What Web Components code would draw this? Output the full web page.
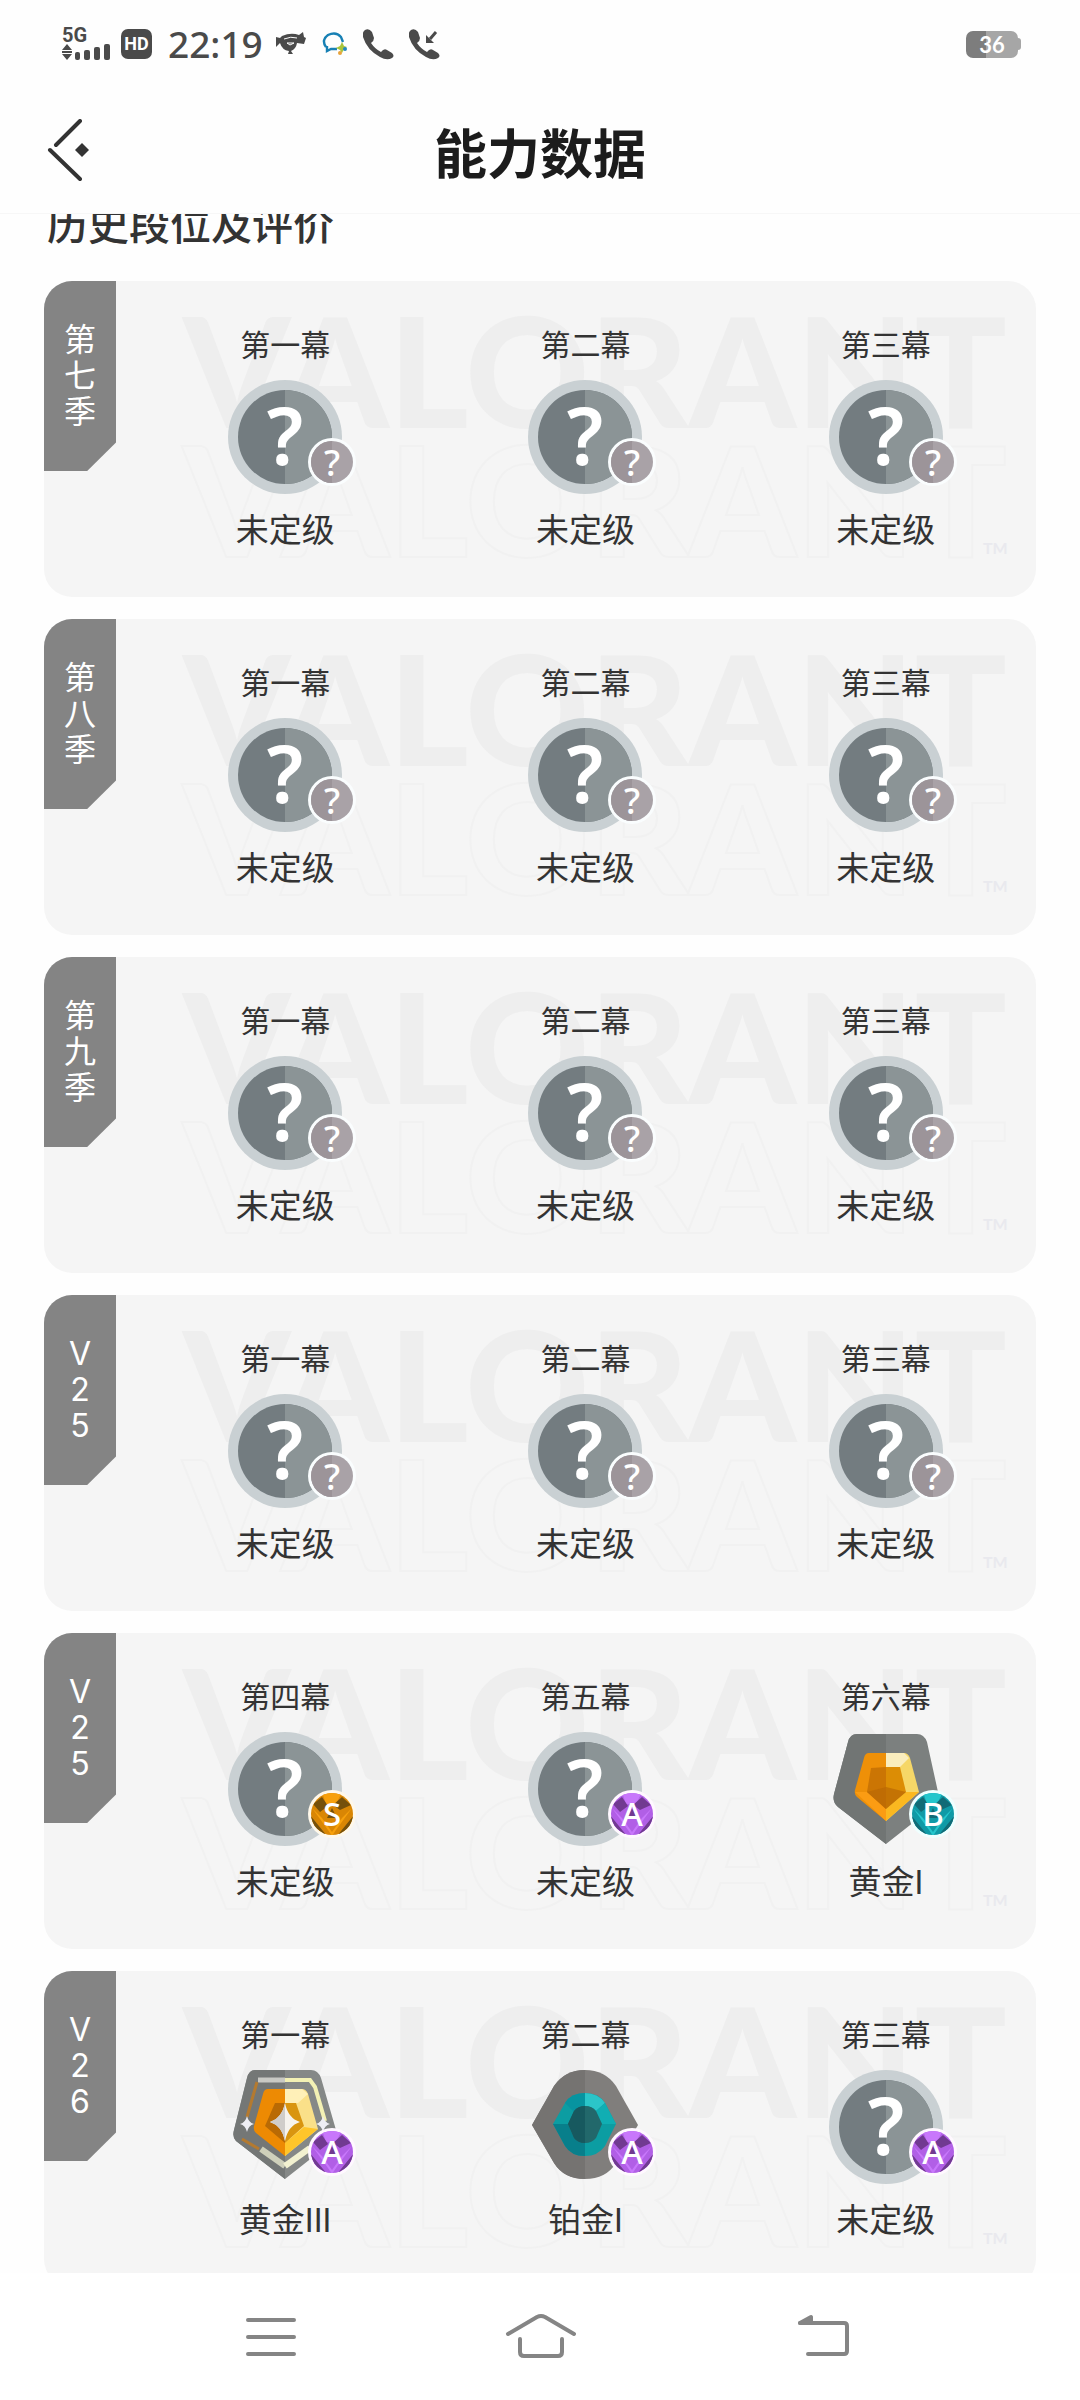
<!DOCTYPE html>
<html lang="zh-CN">
<head>
<meta charset="utf-8">
<meta name="viewport" content="width=device-width, initial-scale=1">
<title>能力数据</title>
<style>
  html, body { margin: 0; height: 100%; background: #fefefe; }
  body { font-family: "Noto Sans CJK SC", "Noto Sans", sans-serif; color: #333; }
</style>
</head>
<body>
<app-screen>
  <status-bar slot="status"></status-bar>
  <page-header slot="header">能力数据</page-header>
  <rank-history heading="历史段位及评价">
    <season-card label="第七季">
      <act-rank act="第一幕" rank="未定级" emblem="none" grade="?"></act-rank>
      <act-rank act="第二幕" rank="未定级" emblem="none" grade="?"></act-rank>
      <act-rank act="第三幕" rank="未定级" emblem="none" grade="?"></act-rank>
    </season-card>
    <season-card label="第八季">
      <act-rank act="第一幕" rank="未定级" emblem="none" grade="?"></act-rank>
      <act-rank act="第二幕" rank="未定级" emblem="none" grade="?"></act-rank>
      <act-rank act="第三幕" rank="未定级" emblem="none" grade="?"></act-rank>
    </season-card>
    <season-card label="第九季">
      <act-rank act="第一幕" rank="未定级" emblem="none" grade="?"></act-rank>
      <act-rank act="第二幕" rank="未定级" emblem="none" grade="?"></act-rank>
      <act-rank act="第三幕" rank="未定级" emblem="none" grade="?"></act-rank>
    </season-card>
    <season-card label="V25">
      <act-rank act="第一幕" rank="未定级" emblem="none" grade="?"></act-rank>
      <act-rank act="第二幕" rank="未定级" emblem="none" grade="?"></act-rank>
      <act-rank act="第三幕" rank="未定级" emblem="none" grade="?"></act-rank>
    </season-card>
    <season-card label="V25">
      <act-rank act="第四幕" rank="未定级" emblem="none" grade="S"></act-rank>
      <act-rank act="第五幕" rank="未定级" emblem="none" grade="A"></act-rank>
      <act-rank act="第六幕" rank="黄金I" emblem="gold1" grade="B"></act-rank>
    </season-card>
    <season-card label="V26">
      <act-rank act="第一幕" rank="黄金III" emblem="gold3" grade="A"></act-rank>
      <act-rank act="第二幕" rank="铂金I" emblem="platinum1" grade="A"></act-rank>
      <act-rank act="第三幕" rank="未定级" emblem="none" grade="A"></act-rank>
    </season-card>
  </rank-history>
  <system-nav slot="nav"></system-nav>
</app-screen>

<script>
class BaseElement extends HTMLElement {
  connectedCallback() {
    if (this.shadowRoot) return;
    this.attachShadow({ mode: "open" }).innerHTML = this.render();
  }
}

customElements.define("app-screen", class extends BaseElement {
  render() {
    return `
      <style>
        :host { display: flex; flex-direction: column; height: 100vh; overflow: hidden; }
        main { flex: 1; min-height: 0; overflow: hidden; }
      </style>
      <slot name="status"></slot>
      <slot name="header"></slot>
      <main><slot></slot></main>
      <slot name="nav"></slot>`;
  }
});

customElements.define("status-bar", class extends BaseElement {
  render() {
    const phone = `<path d="M2 1Q6-1 9 3L11 9Q11 12 8 14Q12 20 18 23Q21 19 24 21L29 24Q32 27 29 29Q24 32 17 28Q4 21 0 8Q-1 3 2 1Z"/>`;
    return `
      <style>
        :host { display: flex; align-items: center; height: 88px; flex: none; padding: 0 59px 0 62px; color: #4a4a4a; fill: #4a4a4a; }
        svg { display: block; flex: none; }
        .signal { display: flex; flex-direction: column; font: 700 20px/16px Roboto, sans-serif; margin-right: 11px; }
        .hd { width: 31px; height: 30px; border-radius: 7px; background: #4a4a4a; color: #fff; font: 700 18px/30px Roboto, sans-serif; text-align: center; }
        .time { font: 500 37px/42px "Noto Sans", sans-serif; margin: 0 12px 0 16px; }
        .battery { margin-left: auto; display: flex; align-items: center; }
        .cell { width: 52px; height: 27px; border-radius: 7px; background: linear-gradient(90deg, #7d7d7d 38%, #a6a6a6 38%); color: #fff; font: 700 22px/27px Lato, sans-serif; text-align: center; }
        .cap { width: 3px; height: 12px; border-radius: 0 4px 4px 0; background: #a6a6a6; }
        .icons { display: flex; align-items: center; gap: 15px; }
      </style>
      <div class="signal"><span>5G</span>
        <svg width="48" height="18" viewBox="0 0 48 18"><path d="M5 1l5 6H0zM5 17l5-6H0zM0 8h10v2H0z"/><rect x="13" y="9" width="5" height="8" rx="2"/><rect x="22" y="7" width="6" height="10" rx="2"/><rect x="32" y="4" width="6" height="13" rx="2"/><rect x="42" y="1" width="6" height="16" rx="2"/></svg>
      </div>
      <span class="hd">HD</span>
      <span class="time">22:19</span>
      <div class="icons">
        <svg width="32" height="24" viewBox="0 0 32 24"><path d="M1 5l4 1 2-2q9-4 17-1l4-3 1 5 2 1-2 6-7-1q-1 6-6 8l2 3h-5l1-3q-7-1-9-8l-4 4z"/><path d="M9 7q7-3 13-1M12 11h7l-4 2z" fill="none" stroke="#fff" stroke-width="1"/></svg>
        <svg width="26" height="24" viewBox="0 0 26 24"><path d="M4 15Q-1 8 6 3q8-4 13 2l2 5M5 14v5l4-2h6" fill="none" stroke="#1780b4" stroke-width="2.4"/><path d="M20 10l2 4 3 1-3 2-2 4-2-3-4-2 4-2z" fill="#a9c43b"/><circle cx="18" cy="21" r="2" fill="#e8a33b"/><circle cx="23" cy="17" r="2" fill="#2489c0"/></svg>
        <svg width="31" height="31" viewBox="0 0 31 31">${phone}</svg>
        <svg width="31" height="31" viewBox="0 0 31 31">${phone}<path d="M27 3l-6 7" stroke="#4a4a4a" stroke-width="3"/><path d="M17 6v8h8z"/></svg>
      </div>
      <div class="battery"><span class="cell">36</span><span class="cap"></span></div>`;
  }
});

customElements.define("page-header", class extends BaseElement {
  render() {
    return `
      <style>
        :host { display: grid; grid-template-columns: 1fr auto 1fr; align-items: center; height: 126px; flex: none; box-sizing: border-box; padding: 0 44px; border-bottom: 1px solid #f7f7f7; }
        button { justify-self: start; border: 0; background: none; padding: 0; }
        svg { display: block; }
        h1 { margin: 0; font-size: 53px; line-height: 64px; font-weight: 700; color: #1c1c1c; }
      </style>
      <button aria-label="返回"><svg width="48" height="64" viewBox="0 0 48 64" fill="none" stroke="#333" stroke-width="4" stroke-linecap="round"><path d="M12 26L36 2M6 31L36 60"/><path d="M38 24l7 7-7 7-7-7z" fill="#333" stroke="none"/></svg></button>
      <h1><slot></slot></h1>`;
  }
});

customElements.define("rank-history", class extends BaseElement {
  render() {
    return `
      <style>
        :host { display: flex; flex-direction: column; margin-top: -22px; padding: 0 44px; }
        h2 { margin: 0 3px 28px; font-size: 41px; line-height: 61px; font-weight: 500; }
        .list { display: flex; flex-direction: column; gap: 22px; }
      </style>
      <h2>${this.getAttribute("heading")}</h2>
      <div class="list"><slot></slot></div>`;
  }
});

customElements.define("season-card", class extends BaseElement {
  render() {
    const label = [...this.getAttribute("label")].map(c => `<span>${c}</span>`).join("");
    return `
      <style>
        :host { display: grid; grid-template-columns: 100%; height: 316px; border-radius: 28px; background: #f5f5f5; overflow: hidden; font-family: Inter, "Noto Sans CJK SC", sans-serif; }
        .mark, .tab, .acts { grid-area: 1 / 1; }
        .mark { display: flex; flex-direction: column; padding: 24px 0 0 139px; font: 900 153px/129px Lato, sans-serif; color: #eeeeee; white-space: nowrap; }
        .line { display: flex; align-items: flex-end; color: transparent; -webkit-text-stroke: 2px #f1f1f1; }
        small { margin-left: -24px; font: 700 16px/30px Lato, sans-serif; color: #e9e9ee; -webkit-text-stroke: 0; }
        .tab { width: 72px; height: 190px; background: #848484; color: #fff; clip-path: polygon(0 0, 100% 0, 100% 85%, 60% 100%, 0 100%); display: flex; flex-direction: column; align-items: center; justify-content: center; font-size: 32px; line-height: 36px; }
        .acts { display: grid; grid-template-columns: repeat(3, 1fr); padding: 46px 0 0 91px; }
      </style>
      <div class="mark" aria-hidden="true"><span>VALORANT</span><span class="line">VALORANT<small>TM</small></span></div>
      <div class="tab">${label}</div>
      <div class="acts"><slot></slot></div>`;
  }
});

const star = (x, y, w, h) => `M${x} ${y - h}Q${x + w / 5} ${y - h / 5} ${x + w} ${y}Q${x + w / 5} ${y + h / 5} ${x} ${y + h}Q${x - w / 5} ${y + h / 5} ${x - w} ${y}Q${x - w / 5} ${y - h / 5} ${x} ${y - h}Z`;

const EMBLEMS = {
  none: `
    <circle cx="57" cy="57" r="57" fill="#c9d0d3"/>
    <circle cx="57" cy="57" r="47" fill="#737c80"/>
    <path d="M57 10a47 47 0 0 1 0 94z" fill="#8b9496"/>
    <text x="57" y="85" font-family="Noto Sans" font-weight="600" font-size="79" text-anchor="middle" fill="#fff">?</text>`,
  gold1: `
    <path d="M28 2H88Q95 2 98 10L109 60Q111 69 104 75L57 112 9 75Q3 70 5 62L19 10Q21 2 28 2Z" fill="#7c807f"/>
    <path d="M57 2H28Q21 2 19 10L5 62Q3 70 9 75L57 112Z" fill="#717574"/>
    <path d="M40 21H57V89L28 65Q25 62 26 58L35 26Q36 21 40 21Z" fill="#ee9008"/>
    <path d="M57 21H75Q79 21 81 26L90 60 57 89Z" fill="#f6d768"/>
    <path d="M57 21H75L80 26 71 35H57Z" fill="#faedbd"/>
    <path d="M57 77L77 60 90 60 57 89Z" fill="#fbb820"/>
    <path d="M26 60L39 60 57 77V89Z" fill="#fb9c13"/>
    <path d="M42 36L57 35V77L38 60Z" fill="#cb7504"/>
    <path d="M57 35H71L77 60 57 77Z" fill="#dc8d05"/>
    <path d="M38 60L57 55 77 60 57 77Z" fill="#b96804" opacity=".7"/>`,
  gold3: `
    <path d="M27 0H83Q90 0 93 8L108 60Q110 67 104 72L57 109 8 71Q4 67 6 60L19 8Q21 0 27 0Z" fill="#858887"/>
    <path d="M57 0H27Q21 0 19 8L6 60Q4 67 8 71L57 109Z" fill="#747776"/>
    <g fill="none" stroke-width="4">
      <path d="M30 10H57" stroke="#c9c9c4" stroke-width="5"/><path d="M57 10H82L87 17 97 51" stroke="#f3f1b4"/>
      <path d="M29 12L19 47M14 69L31 79" stroke="#b47a30" stroke-width="3"/>
      <path d="M33 79L57 96" stroke="#cfd0bb" stroke-width="6"/><path d="M57 96L82 78" stroke="#f2f1d0" stroke-width="6"/>
    </g>
    <path d="M40 19H57V86L28 63Q25 60 26 56L35 24Q36 19 40 19Z" fill="#ed8a03"/>
    <path d="M57 19H74Q78 19 80 24L90 59 57 86Z" fill="#fae089"/>
    <path d="M57 19H74L80 24 70 33H57Z" fill="#fff0b8"/>
    <path d="M57 73L76 57 90 59 57 86Z" fill="#ffc52a"/>
    <path d="M47 33H57V73L37 56Z" fill="#b96a04"/><path d="M57 33H68L76 56 57 73Z" fill="#d99510"/>
    <path d="${star(57, 52, 15, 19)}" fill="#f6f3ee"/><path d="M57 33Q54 48 42 52Q54 56 57 71Z" fill="#d0cdca"/>
    <path d="${star(19, 54, 7, 8)}${star(95, 54, 7, 8)}" fill="#eeeef4"/>`,
  platinum1: `
    <path d="M4 55L26 16Q37 0 57 0T88 16L110 55 88 93Q78 109 57 109T26 93Z" fill="#807e7c"/>
    <path d="M57 0Q37 0 26 16L4 55 26 93Q36 109 57 109Z" fill="#757371"/>
    <path d="M25 54L37 33Q43 23 57 23T77 33L88 54 77 76Q70 86 57 86T37 76Z" fill="#0c9da2"/>
    <path d="M25 54L40 54 46 68 57 73V86Q43 86 37 76Z" fill="#087f8b"/>
    <path d="M57 23Q70 23 77 33L68 41Q64 36 57 36Z" fill="#2bc5c9"/>
    <path d="M77 33L88 54 74 54 68 41Z" fill="#10aeb3"/>
    <path d="M37 33Q43 23 57 23V36L46 42Z" fill="#0794a0"/>
    <path d="M40 54L46 41Q50 36 57 36T68 41L74 54 68 68Q64 73 57 73T46 68Z" fill="#22686b"/>
    <path d="M40 54L46 41Q50 36 57 36V73Q50 73 46 68Z" fill="#17595f"/>`
};

const GRADES = {
  "?": { base: "#a9a2a7", light: "#a49da2", dark: "#a49da2", ring: "#fafdfe" },
  S: { base: "#d98604", light: "#f7a00c", dark: "#75500b", ring: "#fff8ea" },
  A: { base: "#b15fe6", light: "#c877fb", dark: "#713a91", ring: "#fff8ff" },
  B: { base: "#109aa6", light: "#25c6cc", dark: "#116b76", ring: "#efffff" }
};

const gradeBadge = grade => {
  const c = GRADES[grade];
  const letter = grade === "?"
    ? `<path d="M24 3a21 21 0 0 0 0 42z" fill="#9c9499"/><text x="24" y="38" font-size="36" font-weight="500">?</text>`
    : `<g clip-path="url(#disc)"><path d="M14 2H34L28 14H18ZM4 18L20 40 24 46 28 40 44 18 34 28 24 42 14 28Z" fill="${c.light}"/>
       <path d="M5 14L14 7 20 16 12 22ZM25 15L34 7 43 15 32 20ZM2 25L19 46 8 44ZM46 25L29 46 40 44ZM24 18L29 28H19Z" fill="${c.dark}"/></g>
       <text x="24" y="36" font-size="33" font-weight="500">${grade}</text>`;
  return `<svg class="grade" width="48" height="48" viewBox="0 0 48 48">
    <clipPath id="disc"><circle cx="24" cy="24" r="21"/></clipPath>
    <circle cx="24" cy="24" r="24" fill="${c.ring}"/><circle cx="24" cy="24" r="21" fill="${c.base}"/>
    <g font-family="Noto Sans" text-anchor="middle" fill="#fff">${letter}</g></svg>`;
};

customElements.define("act-rank", class extends BaseElement {
  render() {
    return `
      <style>
        :host { display: flex; flex-direction: column; align-items: center; }
        .act { font-size: 30px; line-height: 36px; }
        .emblem { position: relative; width: 114px; height: 114px; margin: 17px 0 16px; }
        svg { display: block; }
        .grade { position: absolute; right: -14px; bottom: 8px; }
        .rank { font-size: 33px; line-height: 40px; }
      </style>
      <div class="act">${this.getAttribute("act")}</div>
      <div class="emblem">
        <svg width="114" height="114" viewBox="0 0 114 114">${EMBLEMS[this.getAttribute("emblem")]}</svg>
        ${gradeBadge(this.getAttribute("grade"))}
      </div>
      <div class="rank">${this.getAttribute("rank")}</div>`;
  }
});

customElements.define("system-nav", class extends BaseElement {
  render() {
    return `
      <style>
        :host { display: block; flex: none; background: #fff; }
        nav { display: grid; grid-template-columns: repeat(3, 1fr); width: 75%; height: 127px; margin: 0 auto; }
        button { display: grid; place-items: center; border: 0; padding: 0; background: none; }
        svg { fill: none; stroke: #858585; stroke-width: 4; stroke-linecap: round; stroke-linejoin: round; }
      </style>
      <nav>
        <button aria-label="最近任务"><svg width="80" height="48" viewBox="0 0 80 48"><path d="M18 7H64M18 24H64M18 41H64"/></svg></button>
        <button aria-label="主屏幕"><svg width="80" height="48" viewBox="0 0 80 48"><path d="M8 21L37 4Q41 2 45 4L74 21M20 26V39Q20 43 24 43H58Q62 43 62 39V26"/></svg></button>
        <button aria-label="返回"><svg width="80" height="48" viewBox="0 0 80 48"><path d="M30 10H74Q77 10 77 13V38Q77 41 74 41H38"/><path d="M30 10L41 4V10Z" fill="#858585"/></svg></button>
      </nav>`;
  }
});
</script>
</body>
</html>
